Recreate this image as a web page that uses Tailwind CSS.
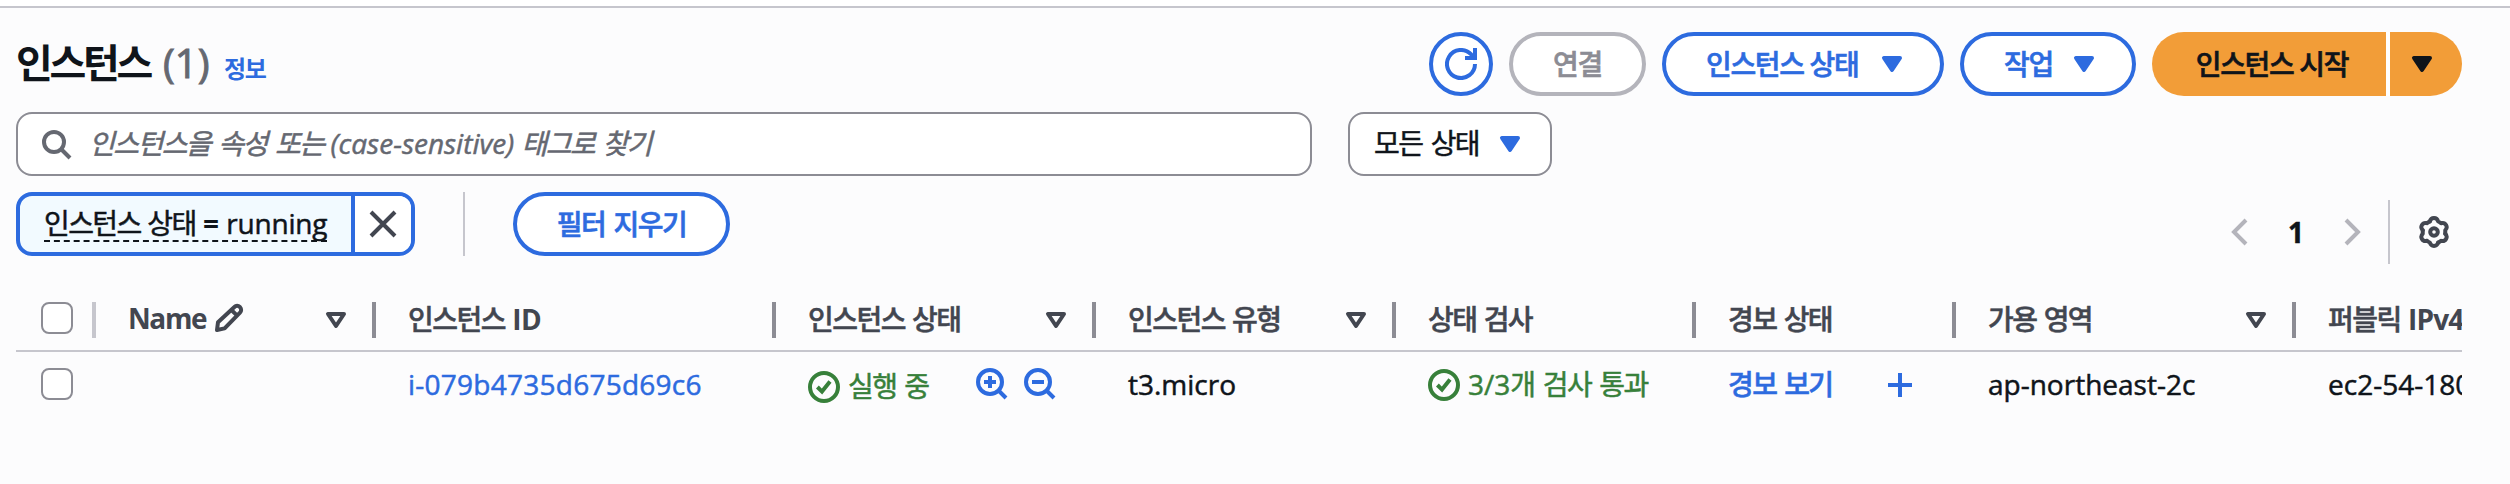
<!DOCTYPE html>
<html lang="ko">
<head>
<meta charset="utf-8">
<title>인스턴스</title>
<script src="https://cdn.jsdelivr.net/npm/@tailwindcss/browser@4"></script>
</head>
<body class="w-[2510px] h-[484px] overflow-hidden bg-[#fcfcfd] font-['Open_Sans','Noto_Sans_CJK_KR',sans-serif] font-normal [-webkit-text-stroke:0.5px] text-[28px] leading-10 text-[#0f141a] whitespace-nowrap">
<svg class="hidden">
  <symbol id="tri" viewBox="0 0 16 16"><path d="M4 5h8l-4 6-4-6z" fill="currentColor" stroke="currentColor" stroke-width="2" stroke-linejoin="round"/></symbol>
  <symbol id="tri-o" viewBox="0 0 16 16"><path d="M4 5h8l-4 6-4-6z" fill="none" stroke="currentColor" stroke-width="2" stroke-linejoin="round"/></symbol>
  <symbol id="check" viewBox="0 0 16 16"><g fill="none" stroke="currentColor" stroke-width="2"><circle cx="8" cy="8" r="7"/><path d="m4.700 8 2.300 2.300 4-5"/></g></symbol>
</svg>
<div class="h-2 bg-white border-b-2 border-[#c6c6cd]"></div>
<main class="ml-4 w-[2446px] pt-6">
  <header class="flex items-center justify-between h-16">
    <div class="flex items-baseline pt-1">
      <h2 class="text-[40px] font-bold [-webkit-text-stroke:0px] tracking-[-3.3px] w-[147px]">인스턴스</h2>
      <span class="text-[40px] text-[#656871] [-webkit-text-stroke:1px] w-[61px]">(1)</span>
      <a class="text-[24px] font-bold [-webkit-text-stroke:0px] tracking-[-1.3px] text-[#2d6bdf]">정보</a>
    </div>
    <div class="flex gap-4 font-medium [-webkit-text-stroke:0.6px] tracking-[-1.35px] [word-spacing:3px] text-[#2d6bdf]">
      <button class="size-16 rounded-full border-4 border-[#2d6bdf] bg-white grid place-items-center">
        <svg class="size-8" viewBox="0 0 16 16" fill="none" stroke="currentColor" stroke-width="2"><path d="M15 8a7 7 0 1 1-1.900-4.800L15 5M15 0v5h-5"/></svg>
      </button>
      <button class="h-16 w-[137px] rounded-full border-4 border-[#b4b4bb] text-[#8c8c94] bg-white">연결</button>
      <button class="h-16 w-[282px] rounded-full border-4 border-[#2d6bdf] bg-white flex items-center pl-10 gap-[18px]"><span class="w-[152px] text-left">인스턴스 상태</span><svg class="size-8"><use href="#tri"/></svg></button>
      <button class="h-16 w-[176px] rounded-full border-4 border-[#2d6bdf] bg-white flex items-center pl-10 gap-[18px]"><span class="w-[46px] text-left">작업</span><svg class="size-8"><use href="#tri"/></svg></button>
      <div class="flex gap-1 bg-white rounded-full text-[#0f141a]">
        <button class="h-16 w-[234px] rounded-l-full bg-[#f29d38] pl-1.5">인스턴스 시작</button>
        <button class="h-16 w-[72px] rounded-r-full bg-[#f29d38] grid place-items-center pr-2"><svg class="size-8"><use href="#tri"/></svg></button>
      </div>
    </div>
  </header>
  <div class="flex gap-9 mt-4">
    <div class="h-16 w-[1296px] rounded-2xl border-2 border-[#8c8c94] bg-white flex items-center text-[#656871]">
      <svg class="size-8 ml-[22px] mr-[17px]" viewBox="0 0 16 16" fill="none" stroke="currentColor" stroke-width="2"><circle cx="7" cy="7" r="5"/><path d="m10.500 10.500 4.500 4.500"/></svg>
      <span class="italic -mt-0.5"><span class="tracking-[-1.55px] [word-spacing:2.5px]">인스턴스을 속성 또는</span> (case-sensitive) <span class="tracking-[-1.55px] [word-spacing:2.5px]">태그로 찾기</span></span>
    </div>
    <div class="h-16 w-[204px] rounded-2xl border-2 border-[#8c8c94] bg-white flex items-center pl-6">
      <span class="-mt-0.5 tracking-[-1.55px] [word-spacing:2.5px] w-[120px]">모든 상태</span><svg class="size-8 text-[#2d6bdf]"><use href="#tri"/></svg>
    </div>
  </div>
  <div class="flex mt-4 h-[72px]">
    <div class="h-16 w-[399px] rounded-2xl border-4 border-[#2d6bdf] bg-[#f2faff] flex overflow-hidden">
      <div class="w-[335px] border-r-4 border-[#2d6bdf] pl-6 pt-[7px]"><span class="inline-block h-[39px] w-[283px] border-b-2 border-dashed border-[#0f141a]"><span class="tracking-[-1.6px] [word-spacing:1px]">인스턴스 상태</span> <span class="font-bold [-webkit-text-stroke:0px]">=</span> <span class="tracking-[-0.2px]">running</span></span></div>
      <div class="flex-1 bg-white grid place-items-center text-[#424650]"><svg class="size-8" viewBox="0 0 16 16" fill="none" stroke="currentColor" stroke-width="2"><path d="m2 2 12 12M14 2 2 14"/></svg></div>
    </div>
    <div class="h-16 w-0.5 bg-[#c6c6cd] ml-12 mr-12"></div>
    <button class="h-16 w-[217px] rounded-full border-4 border-[#2d6bdf] bg-white text-[#2d6bdf] font-medium [-webkit-text-stroke:0.6px] tracking-[-1.55px] [word-spacing:2.5px]">필터 지우기</button>
    <div class="ml-auto mt-2 h-16 flex items-center text-[#b4b4bb]">
      <svg class="size-8" viewBox="0 0 16 16" fill="none" stroke="currentColor" stroke-width="2"><path d="M11 2 5 8l6 6"/></svg>
      <span class="text-[#0f141a] font-bold w-20 text-center">1</span>
      <svg class="size-8" viewBox="0 0 16 16" fill="none" stroke="currentColor" stroke-width="2"><path d="m5 2 6 6-6 6"/></svg>
      <div class="h-16 w-0.5 bg-[#c6c6cd] ml-5 mr-7"></div>
      <svg class="size-8 mr-3 text-[#424650]" viewBox="-8 -8 16 16" fill="none" stroke="currentColor" stroke-width="2" stroke-linejoin="round" stroke-linecap="round">
        <circle r="1.900"/>
        <path id="tooth" d="M-2.040-5.320C-1.500-7.500 1.500-7.500 2.040-5.320L3.590-4.430"/>
        <use href="#tooth" transform="rotate(60)"/><use href="#tooth" transform="rotate(120)"/><use href="#tooth" transform="rotate(180)"/><use href="#tooth" transform="rotate(240)"/><use href="#tooth" transform="rotate(300)"/>
      </svg>
    </div>
  </div>
  <div class="grid grid-cols-[80px_280px_400px_320px_300px_300px_260px_340px_166px] overflow-hidden mt-[22px]">
    <div class="contents font-medium text-[#424650]">
      <div class="h-[66px] pt-4 pl-[25px] flex border-b-2 border-[#c6c6cd]"><span class="size-8 rounded-lg border-2 border-[#8c8c94] bg-white"></span><i class="w-1 h-9 bg-[#c6c6cd] ml-auto"></i></div>
      <div class="h-[66px] pt-4 pl-8 flex border-b-2 border-[#c6c6cd]"><span class="-mt-1 w-[85px] font-bold [-webkit-text-stroke:0px] tracking-[-1.4px]">Name</span><svg class="size-8" viewBox="0 0 16 16" fill="none" stroke="currentColor" stroke-width="2" stroke-linejoin="round"><path d="m2 14 .5-3.900L10.700 2.500a1.900 1.900 0 0 1 2.700 0l.1.100a1.900 1.900 0 0 1 0 2.700L5.800 13.200 2 14zM9.200 4l2.900 2.800"/></svg><svg class="size-8 ml-auto mr-5 mt-0.5"><use href="#tri-o"/></svg><i class="w-1 h-9 bg-[#8c8c94]"></i></div>
      <div class="h-[66px] pt-4 pl-8 flex border-b-2 border-[#c6c6cd]"><span class="-mt-[3px]"><span class="tracking-[-1.55px]">인스턴스</span> <span class="font-bold [-webkit-text-stroke:0px] tracking-[-0.5px]">ID</span></span><i class="w-1 h-9 bg-[#8c8c94] ml-auto"></i></div>
      <div class="h-[66px] pt-4 pl-8 flex border-b-2 border-[#c6c6cd]"><span class="-mt-[3px] tracking-[-1.55px] [word-spacing:1.5px]">인스턴스 상태</span><svg class="size-8 ml-auto mr-5 mt-0.5"><use href="#tri-o"/></svg><i class="w-1 h-9 bg-[#8c8c94]"></i></div>
      <div class="h-[66px] pt-4 pl-8 flex border-b-2 border-[#c6c6cd]"><span class="-mt-[3px] tracking-[-1.55px] [word-spacing:1.5px]">인스턴스 유형</span><svg class="size-8 ml-auto mr-5 mt-0.5"><use href="#tri-o"/></svg><i class="w-1 h-9 bg-[#8c8c94]"></i></div>
      <div class="h-[66px] pt-4 pl-8 flex border-b-2 border-[#c6c6cd]"><span class="-mt-[3px] tracking-[-1.55px] [word-spacing:1.5px]">상태 검사</span><i class="w-1 h-9 bg-[#8c8c94] ml-auto"></i></div>
      <div class="h-[66px] pt-4 pl-8 flex border-b-2 border-[#c6c6cd]"><span class="-mt-[3px] tracking-[-1.55px] [word-spacing:1.5px]">경보 상태</span><i class="w-1 h-9 bg-[#8c8c94] ml-auto"></i></div>
      <div class="h-[66px] pt-4 pl-8 flex border-b-2 border-[#c6c6cd]"><span class="-mt-[3px] tracking-[-1.55px] [word-spacing:1.5px]">가용 영역</span><svg class="size-8 ml-auto mr-5 mt-0.5"><use href="#tri-o"/></svg><i class="w-1 h-9 bg-[#8c8c94]"></i></div>
      <div class="h-[66px] pt-4 pl-8 flex border-b-2 border-[#c6c6cd] overflow-hidden"><span class="-mt-[3px]"><span class="tracking-[-1.55px]">퍼블릭</span> <span class="font-bold [-webkit-text-stroke:0px] tracking-[-0.8px]">IPv4</span></span></div>
    </div>
    <div class="pt-4 pl-[25px]"><span class="block size-8 rounded-lg border-2 border-[#8c8c94] bg-white"></span></div>
    <div></div>
    <div class="pt-3 pl-8 tracking-[0.25px] text-[#2d6bdf]">i-079b4735d675d69c6</div>
    <div class="pt-3 pl-8 flex text-[#2d6bdf]">
      <svg class="size-8 mt-[7px] mr-2 text-[#37803a]"><use href="#check"/></svg><span class="mt-0.5 w-[128px] tracking-[-1.55px] [word-spacing:2px] text-[#37803a]">실행 중</span>
      <svg class="size-8 mt-1 mr-4" viewBox="0 0 16 16" fill="none" stroke="currentColor" stroke-width="2"><circle cx="7" cy="7" r="6"/><path d="m11 11 4 4M7 4v6M4 7h6"/></svg>
      <svg class="size-8 mt-1" viewBox="0 0 16 16" fill="none" stroke="currentColor" stroke-width="2"><circle cx="7" cy="7" r="6"/><path d="m11 11 4 4M4 7h6"/></svg>
    </div>
    <div class="pt-3 pl-8">t3.micro</div>
    <div class="pt-3 pl-8 flex text-[#37803a]"><svg class="size-8 mt-[5px] mr-2"><use href="#check"/></svg><span>3/3<span class="tracking-[-1.55px] [word-spacing:2.5px]">개 검사 통과</span></span></div>
    <div class="pt-3 pl-8 flex text-[#2d6bdf]"><span class="font-medium tracking-[-1.55px] [word-spacing:2px] w-[156px]">경보 보기</span><svg class="size-8 mt-[5px]" viewBox="0 0 16 16" fill="none" stroke="currentColor" stroke-width="2"><path d="M8 2v12M2 8h12"/></svg></div>
    <div class="pt-3 pl-8">ap-northeast-2c</div>
    <div class="pt-3 pl-8 overflow-hidden">ec2-54-180</div>
  </div>
</main>
</body>
</html>
